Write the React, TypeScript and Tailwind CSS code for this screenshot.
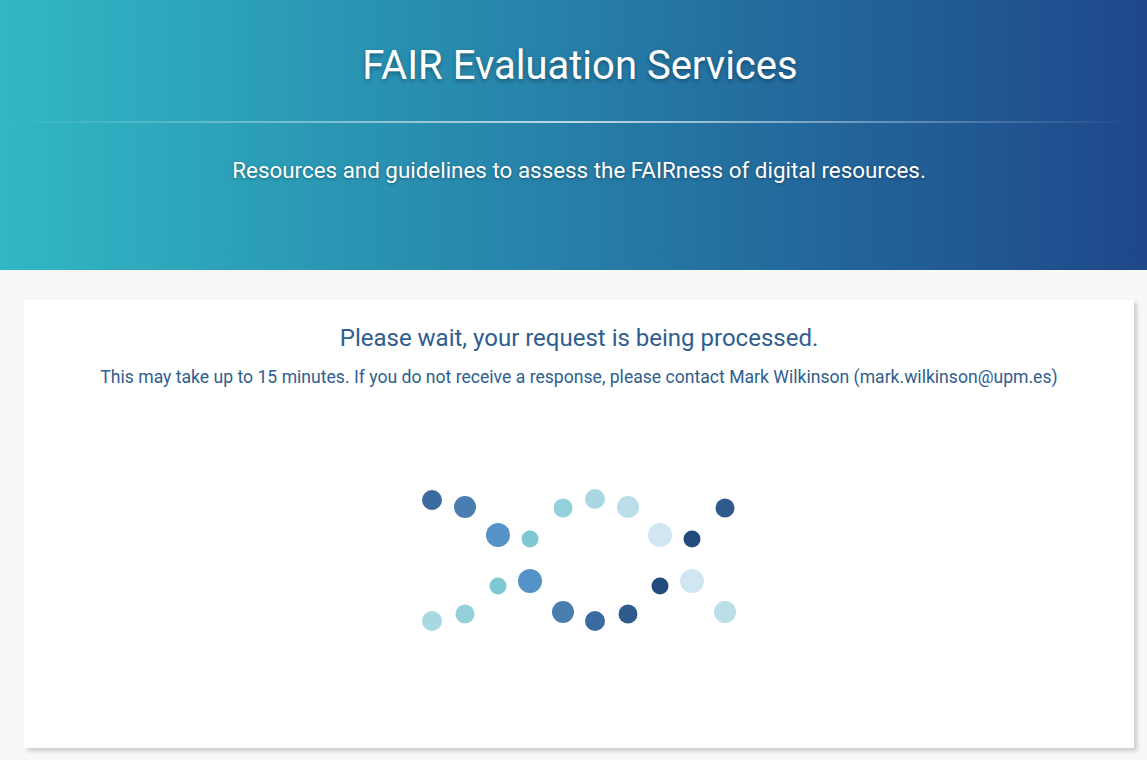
import React from 'react';

type Dot = { x: number; y: number; r: number; c: string };

// loader frame, coordinates relative to a 320x150 box
const dots: Dot[] = [
  { x: 13, y: 15, r: 10, c: '#3a6aa0' },
  { x: 46, y: 22, r: 11, c: '#4a7db0' },
  { x: 79, y: 50, r: 12, c: '#5592c8' },
  { x: 111, y: 54, r: 8.5, c: '#7ec8d2' },
  { x: 144, y: 23, r: 9.5, c: '#94d0da' },
  { x: 176, y: 14, r: 10, c: '#a8d8e2' },
  { x: 209, y: 22, r: 11, c: '#badfe8' },
  { x: 241, y: 50, r: 12, c: '#d0e6f3' },
  { x: 273, y: 54, r: 8.5, c: '#234b7e' },
  { x: 306, y: 23, r: 9.5, c: '#2e5a8c' },
  { x: 13, y: 136, r: 10, c: '#a8d8e2' },
  { x: 46, y: 129, r: 9.5, c: '#94d0da' },
  { x: 79, y: 101, r: 8.5, c: '#7ec8d2' },
  { x: 111, y: 96, r: 12, c: '#5592c8' },
  { x: 144, y: 127, r: 11, c: '#4a7db0' },
  { x: 176, y: 136, r: 10, c: '#3a6aa0' },
  { x: 209, y: 129, r: 9.5, c: '#2e5a8c' },
  { x: 241, y: 101, r: 8.5, c: '#234b7e' },
  { x: 273, y: 96, r: 12, c: '#d0e6f3' },
  { x: 306, y: 127, r: 11, c: '#badfe8' },
];

const Loader = () => (
  <svg width="320" height="150" viewBox="0 0 320 150">
    {dots.map((d, i) => (
      <circle key={i} cx={d.x} cy={d.y} r={d.r} fill={d.c} />
    ))}
  </svg>
);

export default function App() {
  return (
    <div className="min-h-[760px] bg-[#f7f8fa] font-['Roboto',sans-serif]">
      {/* Header */}
      <header className="h-[270px] bg-gradient-to-r from-[#31b8c4] to-[#1f478a] flex flex-col items-center text-white">
        <h1 className="mt-[42px] pl-[13px] text-[40px] leading-[48px] font-normal [text-shadow:0_2px_4px_rgba(0,0,0,0.35)]">
          FAIR Evaluation Services
        </h1>
        <div className="mt-[31px] w-[1127px] h-[2px] bg-gradient-to-r from-transparent via-white/70 to-transparent" />
        <p className="mt-[33px] pl-[11px] text-[22.4px] leading-[28px] [text-shadow:0_1px_3px_rgba(0,0,0,0.35)]">
          Resources and guidelines to assess the FAIRness of digital resources.
        </p>
      </header>

      {/* Content */}
      <main className="pl-6 pr-[13px] pt-[30px] pb-3">
        <div className="h-[448px] bg-white shadow-[3px_3px_4px_rgba(0,0,0,0.18)] flex flex-col items-center text-[#2f5d8f]">
          <h2 className="mt-[23px] text-[24px] leading-[30px]">Please wait, your request is being processed.</h2>
          <p className="mt-[13px] text-[17.6px] leading-[22px]">
            This may take up to 15 minutes. If you do not receive a response, please contact Mark Wilkinson (mark.wilkinson@upm.es)
          </p>
          <div className="mt-[97px]">
            <Loader />
          </div>
        </div>
      </main>
    </div>
  );
}
